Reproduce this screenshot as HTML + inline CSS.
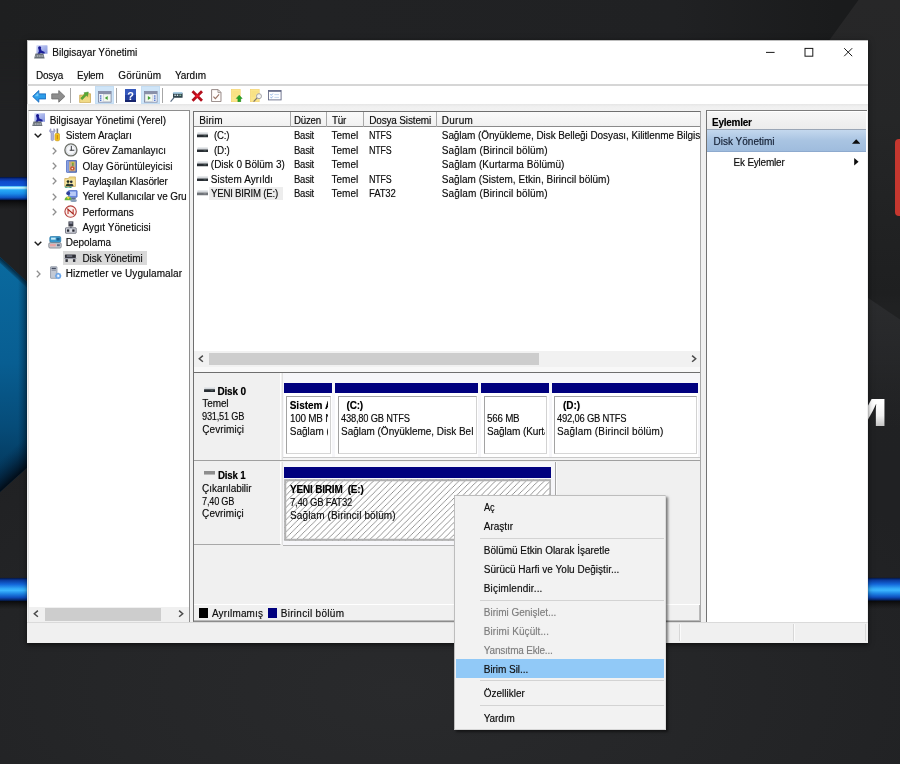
<!DOCTYPE html>
<html lang="tr"><head><meta charset="utf-8"><title>Bilgisayar Yönetimi</title>
<style>
html,body{margin:0;padding:0}
body{width:900px;height:764px;overflow:hidden;position:relative;background:#202123;font-family:"Liberation Sans",sans-serif;font-size:10px;color:#000}
div,span,svg{position:absolute;box-sizing:border-box}
.t{white-space:nowrap;line-height:12px;color:#101010;text-shadow:0 0 .7px rgba(0,0,0,.45)}
.b{font-weight:bold;color:#000}
.g{color:#7f7f7f;text-shadow:0 0 .7px rgba(120,120,120,.45)}
#root{left:0;top:0;width:900px;height:764px;will-change:transform;filter:blur(.38px)}
</style></head><body>
<div id="root">

<!-- wallpaper -->
<div id="bg" style="left:0;top:0;width:900px;height:764px;background:radial-gradient(ellipse 600px 300px at 400px 690px,#292a2c 0%,#252628 50%,#202123 100%),#202123"></div>
<div style="left:0;top:0;width:900px;height:110px;background:linear-gradient(90deg,#1e1f20 0%,#212224 35%,#202123 75%,#1a1b1c 93%);-webkit-mask-image:linear-gradient(#000 35%,transparent);mask-image:linear-gradient(#000 35%,transparent)"></div>
<svg width="900" height="764" viewBox="0 0 900 764" style="left:0;top:0">
  <defs>
    <linearGradient id="gbar" x1="0" y1="0" x2="0" y2="1">
      <stop offset="0" stop-color="#02123a"/><stop offset=".08" stop-color="#0a2f96"/><stop offset=".2" stop-color="#0d4ccc"/>
      <stop offset=".37" stop-color="#1157d6"/><stop offset=".41" stop-color="#5cc4fa"/><stop offset=".44" stop-color="#b8f2ff"/><stop offset=".485" stop-color="#b2f0ff"/>
      <stop offset=".53" stop-color="#48bcfb"/><stop offset=".57" stop-color="#26a8f6"/><stop offset=".72" stop-color="#1a8cea"/>
      <stop offset=".88" stop-color="#0f56c4"/><stop offset=".96" stop-color="#062a7a"/><stop offset="1" stop-color="#020f2c"/>
    </linearGradient>
    <linearGradient id="gbar2" x1="0" y1="0" x2="0" y2="1">
      <stop offset="0" stop-color="#03143e"/><stop offset=".1" stop-color="#0a3a9e"/><stop offset=".28" stop-color="#1467da"/>
      <stop offset=".46" stop-color="#31a8f7"/><stop offset=".54" stop-color="#3cb6ff"/><stop offset=".68" stop-color="#1f86e6"/>
      <stop offset=".84" stop-color="#0f4fbe"/><stop offset=".95" stop-color="#06266e"/><stop offset="1" stop-color="#03122f"/>
    </linearGradient>
    <linearGradient id="gsh" x1="0" y1="0" x2="0" y2="1">
      <stop offset="0" stop-color="#050506" stop-opacity=".95"/><stop offset="1" stop-color="#111" stop-opacity="0"/>
    </linearGradient>
    <linearGradient id="gpoly" x1="0" y1="0" x2="0" y2="1">
      <stop offset="0" stop-color="#0a6a9f"/><stop offset=".45" stop-color="#085e92"/>
      <stop offset=".72" stop-color="#064c79"/><stop offset="1" stop-color="#033152"/>
    </linearGradient>
    <linearGradient id="gpolyx" x1="0" y1="0" x2="1" y2="0">
      <stop offset="0" stop-color="#001020" stop-opacity="0"/><stop offset=".45" stop-color="#001020" stop-opacity="0"/><stop offset=".7" stop-color="#001020" stop-opacity=".42"/><stop offset="1" stop-color="#001020" stop-opacity=".5"/>
    </linearGradient>
    <linearGradient id="gedge" gradientUnits="userSpaceOnUse" x1="20" y1="474" x2="4" y2="456">
      <stop offset="0" stop-color="#010a14" stop-opacity=".96"/><stop offset=".45" stop-color="#021a30" stop-opacity=".6"/><stop offset="1" stop-color="#032a4a" stop-opacity="0"/>
    </linearGradient>
    <linearGradient id="gedge2" gradientUnits="userSpaceOnUse" x1="20" y1="275.5" x2="16" y2="280">
      <stop offset="0" stop-color="#031a2c" stop-opacity=".8"/><stop offset="1" stop-color="#031a2c" stop-opacity="0"/>
    </linearGradient>
    <linearGradient id="gfac" x1="0" y1="0" x2="0" y2="1">
      <stop offset="0" stop-color="#272728"/><stop offset=".16" stop-color="#252627"/><stop offset=".385" stop-color="#1e1f20"/><stop offset=".4" stop-color="#202122" stop-opacity=".9"/><stop offset=".6" stop-color="#212223" stop-opacity="0"/><stop offset="1" stop-color="#222324" stop-opacity="0"/>
    </linearGradient>
    <linearGradient id="gfac2" gradientUnits="userSpaceOnUse" x1="0" y1="296" x2="0" y2="430">
      <stop offset="0" stop-color="#2b2c2e"/><stop offset=".5" stop-color="#27282a" stop-opacity=".8"/><stop offset="1" stop-color="#232426" stop-opacity="0"/>
    </linearGradient>
  </defs>
  <!-- top-right diagonal facet -->
  <polygon points="858.5,0 900,0 900,764 860,764 860,40 829.5,40" fill="url(#gfac)"/>
  <polygon points="860,292.6 900,319.4 900,430 860,430" fill="url(#gfac2)"/>
  <!-- glowing bars -->
  <rect x="0" y="199.6" width="40" height="10" fill="url(#gsh)"/>
  <rect x="0" y="177" width="40" height="23.2" fill="url(#gbar)"/>
  <rect x="0" y="600.4" width="40" height="9" fill="url(#gsh)"/>
  <rect x="0" y="577.9" width="40" height="23.2" fill="url(#gbar2)"/>
  <rect x="860" y="600.2" width="40" height="9" fill="url(#gsh)"/>
  <rect x="860" y="577.8" width="40" height="23" fill="url(#gbar2)"/>
  <!-- blue facet -->
  <polygon points="0,257 40,294 40,456 0,492" fill="url(#gpoly)"/>
  <polygon points="0,257 40,294 40,456 0,492" fill="url(#gpolyx)"/>
  <polygon points="0,492 40,456 40,420 0,456" fill="url(#gedge)"/>
  <polygon points="0,257 40,294 40,300 0,263" fill="url(#gedge2)"/>
  <!-- red tile -->
  <rect x="895" y="139" width="20" height="77" rx="4" fill="#c5372f"/>
</svg>
<span class="t b" style="left:809px;top:389px;width:80px;text-align:right;font-size:39.5px;line-height:46px;color:#e9e9e9;transform:scaleX(1.7);transform-origin:100% 50%;background:linear-gradient(#fff 30%,#f1f1f1 58%,#bcbcbc 84%);-webkit-background-clip:text;background-clip:text;-webkit-text-fill-color:transparent;text-shadow:none">M</span>

<div id="win" style="left:27.3px;top:40px;width:840.5px;height:602.8px;background:#fff;border-top:1px solid #bdbdbd;border-left:1px solid #c6c6c6;box-shadow:0 1px 7px rgba(0,0,0,.28),0 2px 3px rgba(0,0,0,.35)"></div>
<svg style="left:34.30px;top:44.90px" width="13.8" height="13.8" viewBox="0 0 14 14" ><defs><linearGradient id="cmg1" x1="0" y1="0" x2="1" y2="1"><stop offset="0" stop-color="#d5dbf7"/><stop offset=".55" stop-color="#a3b0ea"/><stop offset="1" stop-color="#8493dc"/></linearGradient></defs><rect x="2.4" y=".2" width="11.3" height="8.8" rx=".5" fill="url(#cmg1)"/><circle cx="5.7" cy="2.7" r="1.55" fill="#15158e"/><path d="M4.5 3.9h2.6l.5 1.6 3.2 1.5v1.6H8.4L7 7.9 5.6 9.6H3.4l1.6-3.2z" fill="#1b1f98"/><path d="M1.5 8.6h8l1.3 5.2H.1z" fill="#6a7279"/><path d="M1.9 10.2h7.2l.5 2H1.4z" fill="#aeb4b9"/><path d="M2.6 10.5v1.4M4.4 10.5v1.4M6.2 10.5v1.4M8 10.5v1.4" stroke="#4e565d" stroke-width=".8"/></svg>
<span class="t" style="left:52.30px;top:47.00px;letter-spacing:0.008px;">Bilgisayar Yönetimi</span>
<svg style="left:760px;top:44px" width="100" height="18" viewBox="0 0 100 18"><path d="M6 8.4h8.6" stroke="#1a1a1a" stroke-width="1"/><rect x="45" y="4.4" width="7.8" height="7.8" fill="none" stroke="#1a1a1a" stroke-width="1"/><path d="M84.2 4.2l8 8M92.2 4.2l-8 8" stroke="#1a1a1a" stroke-width="1"/></svg>
<span class="t" style="left:36.00px;top:70.00px;letter-spacing:-0.220px;transform:scaleX(0.9935);transform-origin:0 50%;">Dosya</span>
<span class="t" style="left:77.30px;top:70.00px;letter-spacing:-0.220px;transform:scaleX(0.9919);transform-origin:0 50%;">Eylem</span>
<span class="t" style="left:118.30px;top:70.00px;letter-spacing:0.169px;">Görünüm</span>
<span class="t" style="left:175.00px;top:70.00px;letter-spacing:-0.100px;">Yardım</span>
<div style="left:27.30px;top:84.40px;width:840.50px;height:1.40px;background:#d6d6d6"></div>
<div style="left:27.30px;top:104.20px;width:840.50px;height:6.60px;background:linear-gradient(#e6e6e6,#f0f0f0 40%,#f2f2f2)"></div>
<div style="left:95.20px;top:85.80px;width:19.20px;height:18.00px;background:#cfe5f8;border:1px solid #c4ddf3"></div>
<div style="left:141.20px;top:85.80px;width:19.20px;height:18.00px;background:#cfe5f8;border:1px solid #c4ddf3"></div>
<div style="left:70.20px;top:88.00px;width:1.00px;height:14.60px;background:#a6a6a6"></div>
<div style="left:116.20px;top:88.00px;width:1.00px;height:14.60px;background:#a6a6a6"></div>
<div style="left:162.20px;top:88.00px;width:1.00px;height:14.60px;background:#a6a6a6"></div>
<svg style="left:31.50px;top:89.80px" width="14.6" height="12.8" viewBox="0 0 14.6 12.8" ><path d="M6.8.6L.7 6.4l6.1 5.8V8.9h7V3.9h-7z" fill="#2d9de9" stroke="#1a6cc0" stroke-width=".95" stroke-linejoin="round"/><path d="M6.4 2.6L2.6 6.3h3.8z" fill="#86d3fb" opacity=".75"/></svg>
<svg style="left:50.80px;top:89.80px" width="14.6" height="12.8" viewBox="0 0 14.6 12.8" ><path d="M7.8.6l6.1 5.8-6.1 5.8V8.9h-7V3.9h7z" fill="#8e8e8e" stroke="#747474" stroke-width=".95" stroke-linejoin="round"/></svg>
<svg style="left:79.00px;top:89.80px" width="12.2" height="13" viewBox="0 0 12.2 13.2" ><path d="M.6 5.2h3.6l1-1.4h6.4v9H.6z" fill="#e9cd72" stroke="#c9a856" stroke-width=".8"/><rect x="1.2" y="7.6" width="9.8" height="4.8" fill="#f0da86"/><path d="M1.6 8.4L6 4 4.9 2.9l4.5-.9-.9 4.5-1.1-1.1-4.2 4.4z" fill="#58aa35" stroke="#3f8a24" stroke-width=".5"/></svg>
<svg style="left:98.00px;top:91.00px" width="13.6" height="11.6" viewBox="0 0 14 12" ><rect x=".5" y=".5" width="13" height="11" fill="#fff" stroke="#7c85a0" stroke-width=".9"/><rect x=".5" y=".5" width="13" height="2.6" fill="#8990a8"/><rect x="1.2" y="3.6" width="3.4" height="7.4" fill="#dfe6f4"/><rect x="2" y="4.6" width="1.4" height="1.2" fill="#3a62c4"/><rect x="2" y="6.8" width="1.4" height="1.2" fill="#3a62c4"/><rect x="2" y="9" width="1.4" height="1.2" fill="#3a62c4"/><rect x="5.4" y="3.8" width="7.4" height="7" fill="#f3f7ee" stroke="#b8c0cc" stroke-width=".5"/><path d="M10 5.2L7 7.3l3 2.1z" fill="#3fa032"/></svg>
<svg style="left:124.80px;top:88.80px" width="11" height="13.2" viewBox="0 0 11 13.2" ><rect x="0" y="0" width="11" height="13.2" rx=".5" fill="#24409e"/><rect x="0" y="0" width="11" height="6" rx=".5" fill="#3558bc"/><rect x="0" y="11" width="11" height="2.2" fill="#16246c"/><text x="5.5" y="10.6" text-anchor="middle" font-family="Liberation Sans, sans-serif" font-weight="bold" font-size="11" fill="#fff">?</text></svg>
<svg style="left:144.30px;top:91.00px" width="13.6" height="11.6" viewBox="0 0 14 12" ><rect x=".5" y=".5" width="13" height="11" fill="#fff" stroke="#7c85a0" stroke-width=".9"/><rect x=".5" y=".5" width="13" height="2.6" fill="#8990a8"/><rect x="9.4" y="3.6" width="3.4" height="7.4" fill="#dfe6f4"/><rect x="10.4" y="4.6" width="1.4" height="1.2" fill="#3a62c4"/><rect x="10.4" y="6.8" width="1.4" height="1.2" fill="#3a62c4"/><rect x="10.4" y="9" width="1.4" height="1.2" fill="#3a62c4"/><rect x="1.2" y="3.8" width="7.4" height="7" fill="#f3f7ee" stroke="#b8c0cc" stroke-width=".5"/><path d="M4 5.2l3 2.1-3 2.1z" fill="#3fa032"/></svg>
<svg style="left:169.80px;top:91.20px" width="12.8" height="11" viewBox="0 0 12.8 11" ><path d="M.6 10.6L4 6.6" stroke="#5a6c82" stroke-width="1.2"/><rect x="3" y="2" width="9.6" height="4.8" rx=".6" fill="#2f434c"/><rect x="3.2" y="1" width="9.2" height="1.8" fill="#a9cde4"/><rect x="4.4" y="3.6" width="1.4" height="1.4" fill="#d5e6ee"/><rect x="6.8" y="3.6" width="1.4" height="1.4" fill="#d5e6ee"/><rect x="9.4" y="3.6" width="1.8" height="1.4" fill="#84b89a"/></svg>
<svg style="left:190.50px;top:89.80px" width="12.5" height="12" viewBox="0 0 12.5 12" ><path d="M1.5 1.3L11 10.7M11 1.3L1.5 10.7" stroke="#b40f1c" stroke-width="2.8" stroke-linecap="butt"/><circle cx="6.25" cy="6" r="1.7" fill="#f01428"/></svg>
<svg style="left:211.00px;top:89.00px" width="10.6" height="13.2" viewBox="0 0 10.6 13.2" ><path d="M.6.6h6.6l2.8 2.8v9.2H.6z" fill="#fffdfb" stroke="#8b7d7a" stroke-width=".9"/><path d="M7 .8v2.8h2.8" fill="none" stroke="#8b7d7a" stroke-width=".8"/><path d="M2.4 7.6l2 2.1 3.7-4.2" fill="none" stroke="#9a7566" stroke-width="1.15"/></svg>
<svg style="left:230.60px;top:89.00px" width="12" height="13.2" viewBox="0 0 12 13.2" ><rect x=".4" y=".4" width="8.8" height="12.4" fill="#fbe68c" stroke="#f3d066" stroke-width=".6"/><path d="M1.6 3h6.4M1.6 5h6.4M1.6 7h3.4" stroke="#f6da74" stroke-width=".6"/><path d="M8.2 6.2l3 3.2H9.7v3.4H6.9V9.4H5.3z" fill="#23a526" stroke="#178219" stroke-width=".5"/></svg>
<svg style="left:250.00px;top:89.00px" width="12.2" height="13.2" viewBox="0 0 12.2 13.2" ><rect x=".4" y=".4" width="8.8" height="12.4" fill="#fbe68c" stroke="#f3d066" stroke-width=".6"/><path d="M1.6 3h6.4M1.6 5h4.4M1.6 7h3.4" stroke="#f6da74" stroke-width=".6"/><path d="M3.6 12.6L7.4 8.6" stroke="#80786a" stroke-width="1.2"/><circle cx="9" cy="7.2" r="2.5" fill="#f4f4f0" stroke="#a2a2a8" stroke-width="1"/></svg>
<svg style="left:268.40px;top:90.40px" width="13.6" height="10.4" viewBox="0 0 13.6 10.4" ><rect x=".5" y=".5" width="12.6" height="9.4" fill="#fdfdff" stroke="#666c88" stroke-width=".9"/><rect x=".5" y=".5" width="12.6" height="1.3" fill="#5c6382"/><path d="M2.4 4.4l.9.9 1.5-1.7M2.4 7.2l.9.9 1.5-1.7" fill="none" stroke="#7ba6e0" stroke-width=".9"/><path d="M6.4 4.6h4.6M6.4 7.4h4.6" stroke="#c3d6ee" stroke-width="1"/></svg>
<div style="left:27.30px;top:110.80px;width:840.50px;height:532.00px;background:#f0f0f0"></div>
<div style="left:27.80px;top:110.40px;width:161.80px;height:512.60px;background:#fff;border:1px solid #8e8e8e;border-left-color:#e2e2e2;border-bottom-color:#b0b0b0"></div>
<div style="left:63.00px;top:251.20px;width:84.40px;height:13.60px;background:#d9d9d9"></div>
<svg style="left:31.60px;top:112.50px" width="13.7" height="13.7" viewBox="0 0 14 14" ><defs><linearGradient id="cmg2" x1="0" y1="0" x2="1" y2="1"><stop offset="0" stop-color="#d5dbf7"/><stop offset=".55" stop-color="#a3b0ea"/><stop offset="1" stop-color="#8493dc"/></linearGradient></defs><rect x="2.4" y=".2" width="11.3" height="8.8" rx=".5" fill="url(#cmg2)"/><circle cx="5.7" cy="2.7" r="1.55" fill="#15158e"/><path d="M4.5 3.9h2.6l.5 1.6 3.2 1.5v1.6H8.4L7 7.9 5.6 9.6H3.4l1.6-3.2z" fill="#1b1f98"/><path d="M1.5 8.6h8l1.3 5.2H.1z" fill="#6a7279"/><path d="M1.9 10.2h7.2l.5 2H1.4z" fill="#aeb4b9"/><path d="M2.6 10.5v1.4M4.4 10.5v1.4M6.2 10.5v1.4M8 10.5v1.4" stroke="#4e565d" stroke-width=".8"/></svg>
<span class="t" style="left:49.70px;top:115.00px;letter-spacing:-0.016px;">Bilgisayar Yönetimi (Yerel)</span>
<svg style="left:34.20px;top:133.00px" width="8" height="5" viewBox="0 0 8 5" ><path d="M.7.7L4 3.9 7.3.7" fill="none" stroke="#1c1c1c" stroke-width="1.45"/></svg>
<svg style="left:49.20px;top:127.90px" width="11.2" height="14" viewBox="0 0 12 14.5" ><path d="M2 0.5c-1.5.8-1.9 2.8-.6 4l.8.7v6.9c0 1.6 2.8 1.6 2.8 0V5.2l.8-.7c1.3-1.2.9-3.2-.6-4v2.8H2z" fill="#aeb3dc" stroke="#7d82b4" stroke-width=".6"/><rect x="8.1" y="0.3" width="1.7" height="5.4" fill="#787c88"/><path d="M7.1 5.6h3.7l.7 1.7v5.1c0 1.6-5.1 1.6-5.1 0V7.3z" fill="#f4c41c" stroke="#c28f16" stroke-width=".6"/><rect x="8.3" y="7.3" width="1.3" height="4.6" fill="#cf860e"/></svg>
<span class="t" style="left:65.70px;top:130.00px;letter-spacing:-0.075px;">Sistem Araçları</span>
<svg style="left:51.60px;top:146.80px" width="5" height="8" viewBox="0 0 5 8" ><path d="M.8.7L4 4 .8 7.3" fill="none" stroke="#8f8f8f" stroke-width="1.3"/></svg>
<svg style="left:64.10px;top:143.30px" width="13.8" height="13.8" viewBox="0 0 16 16" ><circle cx="8" cy="8" r="7" fill="#f6f7f9" stroke="#6d7069" stroke-width="1.6"/><circle cx="8" cy="8" r="5.3" fill="none" stroke="#d2d5dc" stroke-width=".9"/><path d="M8.5 3.4V8.6M6.6 8.4H12" fill="none" stroke="#34363c" stroke-width="1.15"/></svg>
<span class="t" style="left:82.40px;top:145.00px;letter-spacing:-0.055px;">Görev Zamanlayıcı</span>
<svg style="left:51.60px;top:162.10px" width="5" height="8" viewBox="0 0 5 8" ><path d="M.8.7L4 4 .8 7.3" fill="none" stroke="#8f8f8f" stroke-width="1.3"/></svg>
<svg style="left:65.60px;top:159.80px" width="11.2" height="12.8" viewBox="0 0 12 14" ><rect x=".5" y=".5" width="11" height="13" rx=".5" fill="#4a69c2" stroke="#3654aa" stroke-width=".8"/><rect x="3" y="1.5" width="7.4" height="11" fill="#c5ad8c"/><rect x=".6" y=".6" width="2.3" height="12.8" fill="#8aa2e4"/><rect x="5.8" y="2" width="3" height="2.4" fill="#d9c23c"/><rect x="6.6" y="3" width="1.6" height="3.6" fill="#6e9a3c"/><circle cx="6.8" cy="9.2" r="2.4" fill="#c9532e"/><circle cx="6.8" cy="9.4" r=".9" fill="#f6e6d8"/></svg>
<span class="t" style="left:82.40px;top:161.00px;letter-spacing:0.062px;">Olay Görüntüleyicisi</span>
<svg style="left:51.60px;top:177.40px" width="5" height="8" viewBox="0 0 5 8" ><path d="M.8.7L4 4 .8 7.3" fill="none" stroke="#8f8f8f" stroke-width="1.3"/></svg>
<svg style="left:64.00px;top:175.80px" width="12.2" height="12" viewBox="0 0 13 13.4" ><path d="M.6 2.8h4l1.2-1.8h6.6v10.6H.6z" fill="#f1d880" stroke="#c9a552" stroke-width=".8"/><rect x="1.2" y="3.8" width="10.6" height="7.2" fill="#f7e6a2"/><circle cx="4.2" cy="6.2" r="1.55" fill="#1d2b20"/><path d="M1.6 11.4c0-4 5.2-4 5.2 0z" fill="#233a28"/><circle cx="7.8" cy="6.4" r="1.45" fill="#222c34"/><path d="M5.4 11.4c0-3.6 4.8-3.6 4.8 0z" fill="#2a3640"/><path d="M.6 11.8c2.2 2 5.4 1.8 7.6.2" fill="none" stroke="#3a9f80" stroke-width="1.2"/></svg>
<span class="t" style="left:82.40px;top:176.00px;letter-spacing:-0.157px;">Paylaşılan Klasörler</span>
<svg style="left:51.60px;top:192.70px" width="5" height="8" viewBox="0 0 5 8" ><path d="M.8.7L4 4 .8 7.3" fill="none" stroke="#8f8f8f" stroke-width="1.3"/></svg>
<svg style="left:64.20px;top:189.80px" width="13.6" height="12.6" viewBox="0 0 15 14" ><rect x="5" y=".5" width="9.5" height="7.6" rx=".6" fill="#6f8fe6" stroke="#4664c0" stroke-width=".8"/><rect x="6.4" y="1.8" width="6.8" height="4.8" fill="#b8caf6"/><circle cx="4.6" cy="3.6" r="2.1" fill="#2d3f9a"/><path d="M.6 11.4c0-5.4 8.2-5.4 8.2 0z" fill="#67b43c"/><path d="M2.6 7.6l2 3 2-3z" fill="#f2d548"/><ellipse cx="10.6" cy="11.6" rx="3.6" ry="1.7" fill="#8aa0b8"/><rect x="8" y="8.4" width="5" height="2" fill="#5a6c8c"/></svg>
<span class="t" style="left:82.40px;top:191.00px;letter-spacing:-0.132px;">Yerel Kullanıcılar ve Gru</span>
<svg style="left:51.60px;top:208.00px" width="5" height="8" viewBox="0 0 5 8" ><path d="M.8.7L4 4 .8 7.3" fill="none" stroke="#8f8f8f" stroke-width="1.3"/></svg>
<svg style="left:64.40px;top:205.20px" width="13.2" height="13.2" viewBox="0 0 16 16" ><circle cx="8" cy="8" r="6.9" fill="#fbf1ee" stroke="#b5403c" stroke-width="1.35"/><path d="M4.9 10.9V5.2l6.2 5.6V5.2" fill="none" stroke="#c0392f" stroke-width="1.35"/><path d="M3.4 4.4l9.2 7.2" stroke="#8c2620" stroke-width=".8"/></svg>
<span class="t" style="left:82.40px;top:207.00px;letter-spacing:-0.032px;">Performans</span>
<svg style="left:65.00px;top:221.20px" width="11.6" height="12.8" viewBox="0 0 12.8 13.8" ><rect x="3.8" y=".3" width="5.4" height="5.6" fill="#3b3d48"/><rect x="4.8" y="1.2" width="3.4" height="1.5" fill="#9a9eb0"/><rect x="5.6" y="5.9" width="1.8" height="1.7" fill="#5c6070"/><rect x=".5" y="7.4" width="11.8" height="5.9" rx=".5" fill="#dcdee6" stroke="#565966" stroke-width=".9"/><rect x="2.1" y="9.1" width="2.6" height="2.6" fill="#262832"/><rect x="8" y="9.1" width="2.6" height="2.6" fill="#262832"/></svg>
<span class="t" style="left:82.40px;top:222.00px;letter-spacing:0.026px;">Aygıt Yöneticisi</span>
<svg style="left:34.20px;top:240.60px" width="8" height="5" viewBox="0 0 8 5" ><path d="M.7.7L4 3.9 7.3.7" fill="none" stroke="#1c1c1c" stroke-width="1.45"/></svg>
<svg style="left:48.10px;top:236.20px" width="14" height="12.6" viewBox="0 0 14.6 13.8" ><rect x="1.6" y=".5" width="12" height="6.6" rx="1.6" fill="#3a99cc" stroke="#2a78a8" stroke-width=".8"/><rect x="3" y="1.8" width="5" height="2.2" fill="#c8ecf8"/><rect x="9" y="2" width="3.4" height="3" fill="#1d5f8e"/><rect x=".5" y="7.4" width="13.6" height="5.8" rx="1.4" fill="#c9ccd2" stroke="#70747e" stroke-width=".8"/><rect x="1.8" y="8.8" width="6.4" height="2.6" fill="#e8a4a4"/><rect x="9.4" y="9" width="3.2" height="2.2" fill="#5d6c86"/></svg>
<span class="t" style="left:65.70px;top:237.00px;letter-spacing:-0.028px;">Depolama</span>
<svg style="left:64.40px;top:254.40px" width="12.8" height="8.4" viewBox="0 0 14 9" ><rect x="1" y=".4" width="12" height="3.8" rx=".5" fill="#2f3038"/><rect x="3" y="1.5" width="6" height="1.3" fill="#8e92a2"/><rect x=".4" y="4.2" width="13.2" height="1.2" fill="#9a9ca8"/><rect x="1.6" y="5.6" width="2.6" height="3" fill="#33343c"/><rect x="9.8" y="5.6" width="2.6" height="3" fill="#33343c"/></svg>
<span class="t" style="left:82.40px;top:253.00px;letter-spacing:-0.054px;">Disk Yönetimi</span>
<svg style="left:35.60px;top:269.50px" width="5" height="8" viewBox="0 0 5 8" ><path d="M.8.7L4 4 .8 7.3" fill="none" stroke="#8f8f8f" stroke-width="1.3"/></svg>
<svg style="left:50.00px;top:266.30px" width="11.6" height="13.4" viewBox="0 0 13 14.4" ><rect x=".6" y=".5" width="7.2" height="13" rx=".5" fill="#c3c9d4" stroke="#808898" stroke-width=".8"/><rect x="1.8" y="1.7" width="4.8" height="1.6" fill="#454c60"/><rect x="1.8" y="4.1" width="4.8" height="1" fill="#8f97a8"/><circle cx="9.2" cy="10.8" r="2.5" fill="#eef5fd" stroke="#6aa4e6" stroke-width="1.5"/><path d="M9.2 7.2v7.2M5.6 10.8h7.2M6.7 8.3l5 5M11.7 8.3l-5 5" stroke="#6aa4e6" stroke-width=".9"/><circle cx="9.2" cy="10.8" r="1.2" fill="#f6faff"/></svg>
<span class="t" style="left:65.70px;top:268.00px;letter-spacing:0.079px;">Hizmetler ve Uygulamalar</span>
<div style="left:187.40px;top:190.00px;width:1.40px;height:13.00px;background:#fff"></div>
<div style="left:28.80px;top:607.00px;width:159.80px;height:15.00px;background:#f0f0f0"></div>
<div style="left:44.60px;top:608.00px;width:116.00px;height:13.00px;background:#cdcdcd"></div>
<svg style="left:33.4px;top:610.4px" width="6" height="7.4" viewBox="0 0 6 7.4"><path d="M4.9.6L1.3 3.7l3.6 3.1" fill="none" stroke="#4a4a4a" stroke-width="1.5"/></svg>
<svg style="left:177.6px;top:610.4px" width="6" height="7.4" viewBox="0 0 6 7.4"><path d="M1.1.6L4.7 3.7 1.1 6.8" fill="none" stroke="#4a4a4a" stroke-width="1.5"/></svg>
<div style="left:192.60px;top:110.60px;width:508.80px;height:511.40px;background:#fff;border:1.2px solid #6f6f6f;border-right-color:#a9a9a9;border-bottom-color:#8c8c8c"></div>
<div style="left:193.80px;top:111.80px;width:506.60px;height:15.40px;background:linear-gradient(#fafafa,#f1f1f1);border-bottom:1.2px solid #8a8a8a"></div>
<div style="left:289.60px;top:112.00px;width:1.00px;height:15.00px;background:#a9a9a9"></div>
<div style="left:325.80px;top:112.00px;width:1.00px;height:15.00px;background:#a9a9a9"></div>
<div style="left:363.40px;top:112.00px;width:1.00px;height:15.00px;background:#a9a9a9"></div>
<div style="left:435.80px;top:112.00px;width:1.00px;height:15.00px;background:#a9a9a9"></div>
<span class="t" style="left:199.20px;top:115.00px;letter-spacing:0.155px;">Birim</span>
<span class="t" style="left:293.50px;top:115.00px;letter-spacing:-0.220px;transform:scaleX(0.9670);transform-origin:0 50%;">Düzen</span>
<span class="t" style="left:331.60px;top:115.00px;letter-spacing:-0.220px;transform:scaleX(0.9890);transform-origin:0 50%;">Tür</span>
<span class="t" style="left:369.20px;top:115.00px;letter-spacing:-0.159px;">Dosya Sistemi</span>
<span class="t" style="left:441.80px;top:115.00px;letter-spacing:0.271px;">Durum</span>
<div style="left:208.80px;top:186.80px;width:73.80px;height:13.60px;background:#ededed"></div>
<svg style="left:197.00px;top:132.30px" width="11.2" height="5.4" viewBox="0 0 12 5.4" ><path d="M.8 0h10.4l.8 2.6H0z" fill="#d3d7db"/><path d="M1.2 .5h9.6" stroke="#eef0f2" stroke-width=".7"/><rect x="0" y="2.5" width="12" height="2.9" rx=".3" fill="#272c32"/><rect x="7" y="3.4" width="3" height="1" fill="#4a5a58"/></svg>
<span class="t" style="left:214.00px;top:130.00px;letter-spacing:-0.220px;transform:scaleX(0.9618);transform-origin:0 50%;">(C:)</span>
<span class="t" style="left:293.50px;top:130.00px;letter-spacing:-0.220px;transform:scaleX(0.9459);transform-origin:0 50%;">Basit</span>
<span class="t" style="left:331.60px;top:130.00px;letter-spacing:-0.022px;">Temel</span>
<span class="t" style="left:369.20px;top:130.00px;letter-spacing:-0.220px;transform:scaleX(0.8920);transform-origin:0 50%;">NTFS</span>
<span class="t" style="left:441.80px;top:130.00px;letter-spacing:-0.079px;">Sağlam (Önyükleme, Disk Belleği Dosyası, Kilitlenme Bilgis</span>
<svg style="left:197.00px;top:146.80px" width="11.2" height="5.4" viewBox="0 0 12 5.4" ><path d="M.8 0h10.4l.8 2.6H0z" fill="#d3d7db"/><path d="M1.2 .5h9.6" stroke="#eef0f2" stroke-width=".7"/><rect x="0" y="2.5" width="12" height="2.9" rx=".3" fill="#272c32"/><rect x="7" y="3.4" width="3" height="1" fill="#4a5a58"/></svg>
<span class="t" style="left:214.00px;top:145.00px;letter-spacing:-0.220px;transform:scaleX(0.9868);transform-origin:0 50%;">(D:)</span>
<span class="t" style="left:293.50px;top:145.00px;letter-spacing:-0.220px;transform:scaleX(0.9459);transform-origin:0 50%;">Basit</span>
<span class="t" style="left:331.60px;top:145.00px;letter-spacing:-0.022px;">Temel</span>
<span class="t" style="left:369.20px;top:145.00px;letter-spacing:-0.220px;transform:scaleX(0.8920);transform-origin:0 50%;">NTFS</span>
<span class="t" style="left:441.80px;top:145.00px;letter-spacing:0.136px;">Sağlam (Birincil bölüm)</span>
<svg style="left:197.00px;top:161.30px" width="11.2" height="5.4" viewBox="0 0 12 5.4" ><path d="M.8 0h10.4l.8 2.6H0z" fill="#d3d7db"/><path d="M1.2 .5h9.6" stroke="#eef0f2" stroke-width=".7"/><rect x="0" y="2.5" width="12" height="2.9" rx=".3" fill="#272c32"/><rect x="7" y="3.4" width="3" height="1" fill="#4a5a58"/></svg>
<span class="t" style="left:210.80px;top:159.00px;letter-spacing:0.006px;">(Disk 0 Bölüm 3)</span>
<span class="t" style="left:293.50px;top:159.00px;letter-spacing:-0.220px;transform:scaleX(0.9459);transform-origin:0 50%;">Basit</span>
<span class="t" style="left:331.60px;top:159.00px;letter-spacing:-0.022px;">Temel</span>
<span class="t" style="left:441.80px;top:159.00px;letter-spacing:0.063px;">Sağlam (Kurtarma Bölümü)</span>
<svg style="left:197.00px;top:175.80px" width="11.2" height="5.4" viewBox="0 0 12 5.4" ><path d="M.8 0h10.4l.8 2.6H0z" fill="#d3d7db"/><path d="M1.2 .5h9.6" stroke="#eef0f2" stroke-width=".7"/><rect x="0" y="2.5" width="12" height="2.9" rx=".3" fill="#272c32"/><rect x="7" y="3.4" width="3" height="1" fill="#4a5a58"/></svg>
<span class="t" style="left:210.80px;top:174.00px;letter-spacing:0.088px;">Sistem Ayrıldı</span>
<span class="t" style="left:293.50px;top:174.00px;letter-spacing:-0.220px;transform:scaleX(0.9459);transform-origin:0 50%;">Basit</span>
<span class="t" style="left:331.60px;top:174.00px;letter-spacing:-0.022px;">Temel</span>
<span class="t" style="left:369.20px;top:174.00px;letter-spacing:-0.220px;transform:scaleX(0.8920);transform-origin:0 50%;">NTFS</span>
<span class="t" style="left:441.80px;top:174.00px;letter-spacing:0.035px;">Sağlam (Sistem, Etkin, Birincil bölüm)</span>
<svg style="left:197.00px;top:190.30px" width="11.2" height="5.4" viewBox="0 0 12 5.4" ><path d="M.8 0h10.4l.8 2.6H0z" fill="#d3d7db"/><path d="M1.2 .5h9.6" stroke="#eef0f2" stroke-width=".7"/><rect x="0" y="2.5" width="12" height="2.9" rx=".3" fill="#6f7378"/><rect x="7" y="3.4" width="3" height="1" fill="#8d9196"/></svg>
<span class="t" style="left:210.80px;top:188.00px;letter-spacing:-0.220px;transform:scaleX(0.9639);transform-origin:0 50%;">YENI BIRIM (E:)</span>
<span class="t" style="left:293.50px;top:188.00px;letter-spacing:-0.220px;transform:scaleX(0.9459);transform-origin:0 50%;">Basit</span>
<span class="t" style="left:331.60px;top:188.00px;letter-spacing:-0.022px;">Temel</span>
<span class="t" style="left:369.20px;top:188.00px;letter-spacing:-0.220px;transform:scaleX(0.9627);transform-origin:0 50%;">FAT32</span>
<span class="t" style="left:441.80px;top:188.00px;letter-spacing:0.136px;">Sağlam (Birincil bölüm)</span>
<div style="left:193.80px;top:351.00px;width:506.60px;height:16.00px;background:#f1f1f1"></div>
<div style="left:208.60px;top:353.00px;width:330.00px;height:12.00px;background:#cdcdcd"></div>
<svg style="left:198.4px;top:355.4px" width="6" height="7.4" viewBox="0 0 6 7.4"><path d="M4.9.6L1.3 3.7l3.6 3.1" fill="none" stroke="#4a4a4a" stroke-width="1.5"/></svg>
<svg style="left:690.6px;top:355.4px" width="6" height="7.4" viewBox="0 0 6 7.4"><path d="M1.1.6L4.7 3.7 1.1 6.8" fill="none" stroke="#4a4a4a" stroke-width="1.5"/></svg>
<div style="left:193.80px;top:367.00px;width:506.60px;height:4.80px;background:#f8f8f8"></div>
<div style="left:193.80px;top:371.60px;width:506.60px;height:1.30px;background:#6e6e6e"></div>
<div style="left:193.80px;top:372.90px;width:506.60px;height:248.00px;background:#f0f0f0"></div>
<div style="left:193.80px;top:372.80px;width:87.40px;height:88.60px;background:#f0f0f0;border-right:1.4px solid #fff;border-bottom:1px solid #a8a8a8"></div><div style="left:282.40px;top:372.80px;width:1.00px;height:88.60px;background:#e1e1e1"></div>
<div style="left:283.20px;top:372.80px;width:417.20px;height:87.80px;background:#f6f6f9"></div>
<div style="left:283.20px;top:456.80px;width:417.20px;height:1.00px;background:#c9c9c9"></div>
<div style="left:283.20px;top:457.80px;width:417.20px;height:2.60px;background:#f4f4f4"></div>
<div style="left:193.80px;top:460.20px;width:506.60px;height:1.20px;background:#a0a0a0"></div>
<svg style="left:203.70px;top:386.60px" width="11.2" height="5" viewBox="0 0 12 5.4" ><path d="M.8 0h10.4l.8 2.6H0z" fill="#d3d7db"/><path d="M1.2 .5h9.6" stroke="#eef0f2" stroke-width=".7"/><rect x="0" y="2.5" width="12" height="2.9" rx=".3" fill="#272c32"/><rect x="7" y="3.4" width="3" height="1" fill="#4a5a58"/></svg>
<span class="t b" style="left:217.50px;top:386.00px;letter-spacing:-0.194px;">Disk 0</span>
<span class="t" style="left:202.30px;top:398.00px;letter-spacing:-0.097px;">Temel</span>
<span class="t" style="left:202.30px;top:411.00px;letter-spacing:-0.220px;transform:scaleX(0.9185);transform-origin:0 50%;">931,51 GB</span>
<span class="t" style="left:202.30px;top:424.00px;letter-spacing:0.074px;">Çevrimiçi</span>
<div style="left:283.60px;top:382.80px;width:48.60px;height:10.60px;background:#00007e"></div><div style="left:283.60px;top:393.40px;width:48.60px;height:63.20px;background:#fff"></div><div style="left:286.20px;top:396.40px;width:44.60px;height:57.80px;border:1px solid #a3a3a3;border-right-color:#d2d2d2;border-bottom-color:#d6d6d6"></div><div style="left:289.7px;top:393.4px;width:37.90px;height:63.200000000000045px;overflow:hidden"><span class="t b" style="left:0.00px;top:7.00px;letter-spacing:0.004px;">Sistem Ayrıldı</span><span class="t" style="left:0.00px;top:20.00px;letter-spacing:-0.220px;transform:scaleX(0.9876);transform-origin:0 50%;">100 MB NTFS</span><span class="t" style="left:0.00px;top:33.00px;letter-spacing:0.035px;">Sağlam (Sistem, Etkin, Birincil bölüm)</span></div>
<div style="left:334.90px;top:382.80px;width:143.50px;height:10.60px;background:#00007e"></div><div style="left:334.90px;top:393.40px;width:143.50px;height:63.20px;background:#fff"></div><div style="left:337.50px;top:396.40px;width:139.50px;height:57.80px;border:1px solid #a3a3a3;border-right-color:#d2d2d2;border-bottom-color:#d6d6d6"></div><div style="left:341px;top:393.4px;width:132.40px;height:63.200000000000045px;overflow:hidden"><span class="t b" style="left:5.60px;top:7.00px;letter-spacing:-0.206px;">(C:)</span><span class="t" style="left:0.00px;top:20.00px;letter-spacing:-0.220px;transform:scaleX(0.9344);transform-origin:0 50%;">438,80 GB NTFS</span><span class="t" style="left:0.00px;top:33.00px;letter-spacing:-0.018px;">Sağlam (Önyükleme, Disk Belleği Dosyası, Kilitlenme Bilgisi Dökümü, Birincil bölüm)</span></div>
<div style="left:481.10px;top:382.80px;width:67.50px;height:10.60px;background:#00007e"></div><div style="left:481.10px;top:393.40px;width:67.50px;height:63.20px;background:#fff"></div><div style="left:483.70px;top:396.40px;width:63.50px;height:57.80px;border:1px solid #a3a3a3;border-right-color:#d2d2d2;border-bottom-color:#d6d6d6"></div><div style="left:487px;top:393.4px;width:57.60px;height:63.200000000000045px;overflow:hidden"><span class="t" style="left:0.00px;top:20.00px;letter-spacing:-0.220px;transform:scaleX(0.9770);transform-origin:0 50%;">566 MB</span><span class="t" style="left:0.00px;top:33.00px;letter-spacing:-0.111px;">Sağlam (Kurtarma Bölümü)</span></div>
<div style="left:551.70px;top:382.80px;width:146.50px;height:10.60px;background:#00007e"></div><div style="left:551.70px;top:393.40px;width:146.50px;height:63.20px;background:#fff"></div><div style="left:554.30px;top:396.40px;width:142.50px;height:57.80px;border:1px solid #a3a3a3;border-right-color:#d2d2d2;border-bottom-color:#d6d6d6"></div><div style="left:557px;top:393.4px;width:137.20px;height:63.200000000000045px;overflow:hidden"><span class="t b" style="left:6.00px;top:7.00px;letter-spacing:-0.073px;">(D:)</span><span class="t" style="left:0.00px;top:20.00px;letter-spacing:-0.220px;transform:scaleX(0.9425);transform-origin:0 50%;">492,06 GB NTFS</span><span class="t" style="left:0.00px;top:33.00px;letter-spacing:0.163px;">Sağlam (Birincil bölüm)</span></div>
<div style="left:193.80px;top:461.60px;width:87.40px;height:83.80px;background:#f0f0f0;border-right:1.4px solid #fff;border-bottom:1px solid #a8a8a8"></div><div style="left:282.40px;top:461.60px;width:1.00px;height:83.80px;background:#e1e1e1"></div>
<div style="left:283.20px;top:461.60px;width:272.00px;height:83.20px;background:#f6f6f9"></div>
<div style="left:555.20px;top:461.80px;width:1.00px;height:83.00px;background:#a6a6a6"></div>
<div style="left:556.20px;top:461.80px;width:1.00px;height:83.00px;background:#fbfbfb"></div>
<div style="left:283.20px;top:544.80px;width:273.00px;height:1.00px;background:#b4b4b4"></div>
<div style="left:203.70px;top:471.30px;width:11.00px;height:4.00px;background:#8d8d8d;border-bottom:1px solid #b9b9b9"></div>
<span class="t b" style="left:217.50px;top:470.00px;letter-spacing:-0.220px;transform:scaleX(0.9729);transform-origin:0 50%;">Disk 1</span>
<span class="t" style="left:202.10px;top:483.00px;letter-spacing:-0.051px;">Çıkarılabilir</span>
<span class="t" style="left:202.10px;top:496.00px;letter-spacing:-0.220px;transform:scaleX(0.9157);transform-origin:0 50%;">7,40 GB</span>
<span class="t" style="left:202.10px;top:508.00px;letter-spacing:0.074px;">Çevrimiçi</span>
<div style="left:283.60px;top:467.00px;width:267.60px;height:11.00px;background:#00007e"></div><svg style="left:283.6px;top:478.6px" width="267.6" height="62.00000000000002" viewBox="0 0 267.6 62.00000000000002"><defs><pattern id="hp" width="6.1" height="6.1" patternUnits="userSpaceOnUse"><rect width="6.1" height="6.1" fill="#fff"/><path d="M-1 7.1L7.1 -1M-1 1L1 -1M5.1 7.1L7.1 5.1" stroke="#6c6c6c" stroke-width=".72"/></pattern></defs><rect x="0" y="0" width="267.6" height="62.00000000000002" fill="url(#hp)"/><rect x="1.2" y="1.2" width="265.20000000000005" height="59.60000000000002" fill="none" stroke="#b1b1b1" stroke-width="2.1"/></svg><div style="left:290px;top:478px;width:257.20px;height:62.60000000000002px;overflow:hidden"><span class="t b" style="left:0.00px;top:6.00px;letter-spacing:-0.191px;">YENI BIRIM&nbsp; (E:)</span><span class="t" style="left:0.00px;top:19.00px;letter-spacing:-0.220px;transform:scaleX(0.9505);transform-origin:0 50%;">7,40 GB FAT32</span><span class="t" style="left:0.00px;top:32.00px;letter-spacing:0.127px;">Sağlam (Birincil bölüm)</span></div>
<div style="left:193.80px;top:604.40px;width:506.60px;height:1.00px;background:#fff"></div>
<div style="left:193.80px;top:605.40px;width:506.60px;height:15.60px;background:#f0f0f0;border-right:1px solid #b9b9b9;border-bottom:1px solid #b9b9b9"></div>
<div style="left:199.40px;top:608.00px;width:8.60px;height:10.40px;background:#000"></div>
<span class="t" style="left:212.00px;top:608.00px;letter-spacing:0.130px;">Ayrılmamış</span>
<div style="left:267.60px;top:608.00px;width:9.40px;height:10.40px;background:#00007e"></div>
<span class="t" style="left:280.70px;top:608.00px;letter-spacing:0.295px;">Birincil bölüm</span>
<div style="left:706.00px;top:110.30px;width:161.00px;height:511.50px;background:#fff;border-left:1.5px solid #737373;border-top:1.5px solid #7b7b7b"></div>
<div style="left:707.40px;top:111.80px;width:159.00px;height:17.40px;background:linear-gradient(#f6f6f6,#ececec)"></div>
<div style="left:707.40px;top:129.00px;width:159.00px;height:1.00px;background:#9aa6b6"></div>
<span class="t b" style="left:712.00px;top:117.00px;letter-spacing:-0.220px;transform:scaleX(0.9959);transform-origin:0 50%;">Eylemler</span>
<div style="left:707.40px;top:130.00px;width:159.00px;height:21.60px;background:linear-gradient(#c4d8ee,#a9c4e2 50%,#9fbcdd);border-bottom:1px solid #8eaace"></div>
<span class="t" style="left:713.40px;top:136.00px;letter-spacing:0.021px;color:#16243c;">Disk Yönetimi</span>
<svg style="left:851.8px;top:138.8px" width="8.4" height="5" viewBox="0 0 8.4 5"><path d="M0 4.8L4.2 .2 8.4 4.8z" fill="#0c0c0c"/></svg>
<span class="t" style="left:733.60px;top:157.00px;letter-spacing:-0.220px;">Ek Eylemler</span>
<svg style="left:854.4px;top:158.2px" width="4.8" height="7.6" viewBox="0 0 4.8 7.6"><path d="M.2 0L4.6 3.8 .2 7.6z" fill="#0c0c0c"/></svg>
<div style="left:27.30px;top:622.00px;width:840.50px;height:20.80px;background:#f0f0f0;border-top:1px solid #dadada"></div>
<div style="left:679.00px;top:624.00px;width:1.00px;height:17.00px;background:#d7d7d7"></div>
<div style="left:680.00px;top:624.00px;width:1.00px;height:17.00px;background:#fbfbfb"></div>
<div style="left:792.60px;top:624.00px;width:1.00px;height:17.00px;background:#d7d7d7"></div>
<div style="left:793.60px;top:624.00px;width:1.00px;height:17.00px;background:#fbfbfb"></div>
<div style="left:864.60px;top:624.00px;width:1.00px;height:17.00px;background:#d9d9d9"></div>
<div style="left:454.00px;top:494.60px;width:212.20px;height:235.40px;background:#f2f2f2;border:1px solid #bdbdbd;border-right-color:#dcdcdc;border-bottom-color:#d6d6d6;box-shadow:2.4px 2.4px 2.4px rgba(0,0,0,.5)"></div>
<span class="t" style="left:483.80px;top:502.00px;letter-spacing:-0.220px;transform:scaleX(0.9256);transform-origin:0 50%;">Aç</span>
<span class="t" style="left:483.80px;top:521.00px;letter-spacing:-0.009px;">Araştır</span>
<div style="left:479.60px;top:537.50px;width:184.00px;height:1.00px;background:#d3d3d3"></div>
<span class="t" style="left:483.80px;top:545.00px;letter-spacing:-0.027px;">Bölümü Etkin Olarak İşaretle</span>
<span class="t" style="left:483.80px;top:564.00px;letter-spacing:0.014px;">Sürücü Harfi ve Yolu Değiştir...</span>
<span class="t" style="left:483.80px;top:583.00px;letter-spacing:0.147px;">Biçimlendir...</span>
<div style="left:479.60px;top:599.60px;width:184.00px;height:1.00px;background:#d3d3d3"></div>
<span class="t g" style="left:483.80px;top:607.00px;letter-spacing:-0.012px;">Birimi Genişlet...</span>
<span class="t g" style="left:483.80px;top:626.00px;letter-spacing:0.086px;">Birimi Küçült...</span>
<span class="t g" style="left:483.80px;top:645.00px;letter-spacing:-0.205px;">Yansıtma Ekle...</span>
<div style="left:455.60px;top:659.20px;width:208.00px;height:18.70px;background:#91c9f7"></div>
<span class="t" style="left:483.80px;top:664.00px;letter-spacing:-0.055px;">Birim Sil...</span>
<div style="left:479.60px;top:680.40px;width:184.00px;height:1.00px;background:#d3d3d3"></div>
<span class="t" style="left:483.80px;top:688.00px;letter-spacing:-0.014px;">Özellikler</span>
<div style="left:479.60px;top:705.10px;width:184.00px;height:1.00px;background:#d3d3d3"></div>
<span class="t" style="left:483.80px;top:713.00px;letter-spacing:-0.100px;">Yardım</span>
</div>
</body></html>
